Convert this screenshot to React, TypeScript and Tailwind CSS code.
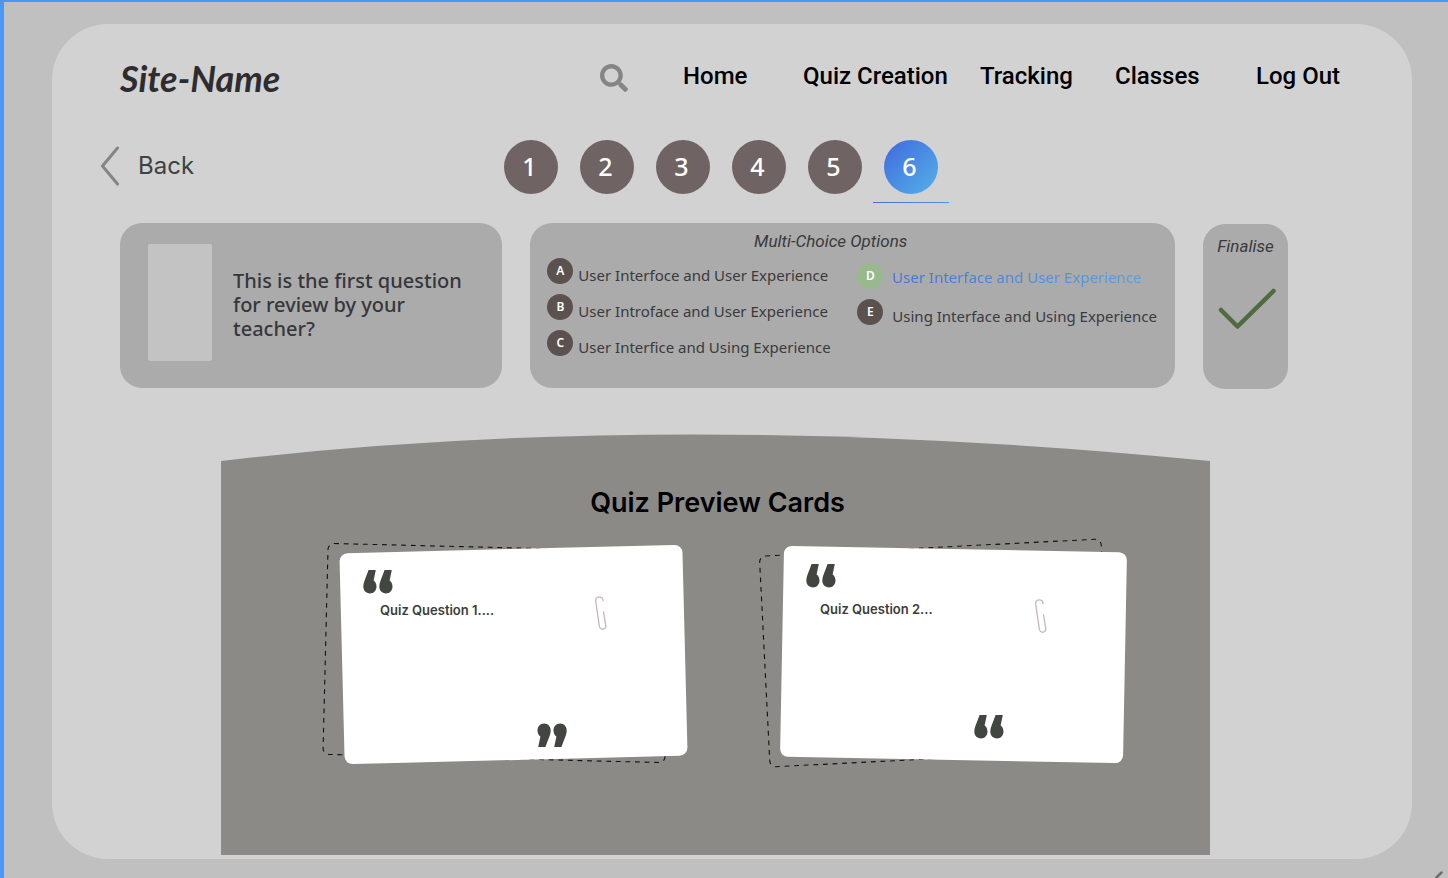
import { FaSearch } from "react-icons/fa";

const steps = [1, 2, 3, 4, 5, 6];
const activeStep = 6;

const navItems = ["Home", "Quiz Creation", "Tracking", "Classes", "Log Out"];

const leftOptions = [
  { letter: "A", label: "User Interfoce and User Experience" },
  { letter: "B", label: "User Introface and User Experience" },
  { letter: "C", label: "User Interfice and Using Experience" },
];

function QuoteMark({ className = "" }: { className?: string }) {
  return (
    <svg viewBox="0 0 30 24" className={`h-6 w-[30px] shrink-0 fill-[#414640] ${className}`} aria-hidden="true">
      <path d="M5.6 0H12.8L10.6 10.4C12.4 11.6 13.5 13.8 13.5 16.4C13.5 20.6 10.6 23.4 6.9 23.4C3.1 23.4 .3 20.6 .3 16.6C.3 14.6 .8 12.7 1.6 10.6Z" />
      <path d="M21.6 0H28.8L26.6 10.4C28.4 11.6 29.5 13.8 29.5 16.4C29.5 20.6 26.6 23.4 22.9 23.4C19.1 23.4 16.3 20.6 16.3 16.6C16.3 14.6 16.8 12.7 17.6 10.6Z" />
    </svg>
  );
}

function PaperClip() {
  return (
    <svg viewBox="0 0 12 34" className="h-[34px] w-3 shrink-0" fill="none" stroke="#c4b7b7" strokeWidth="1.3" strokeLinecap="round" aria-hidden="true">
      <path d="M8 4.7C7.9 2 6.4 .7 4 .8C1.5 1 .4 2.5 .7 5L4.2 29.5C4.7 32.3 6.3 33.4 8.1 33.2C10.1 33 11 31.4 10.7 29.2L8.6 16" />
    </svg>
  );
}

function Outline({ className }: { className: string }) {
  return (
    <svg viewBox="0 0 343 212" className={`absolute h-[212px] w-[343px] overflow-visible ${className}`} aria-hidden="true">
      <rect x="0.5" y="0.5" width="342" height="211" rx="6" fill="none" stroke="#111" strokeWidth="1.1" strokeDasharray="4.8 4.8" />
    </svg>
  );
}

function OptionBadge({ letter, correct = false }: { letter: string; correct?: boolean }) {
  return (
    <span
      className={`flex size-[26px] shrink-0 items-center justify-center rounded-full text-xs font-semibold text-white ${
        correct ? "bg-[#97b98b]" : "bg-[#5b5250]"
      }`}
    >
      {letter}
    </span>
  );
}

export default function App() {
  return (
    <div className="relative flex min-h-screen flex-col overflow-hidden border-t-2 border-l-4 border-[#4798f8] bg-[#c0c0c0] font-['Inter',sans-serif]">
      <div className="mt-[22px] mr-9 mb-[19px] ml-12 flex-1 rounded-[56px] bg-[#d2d2d2] pt-8 pb-1">
        <header className="flex h-11 items-center pr-[60px] pl-[68px]">
          <a href="#" className="font-['Lato',sans-serif] text-[36px] leading-11 font-bold text-[#2d2d2f] italic">
            Site-Name
          </a>
          <button type="button" aria-label="Search" className="mr-[55px] ml-auto">
            <FaSearch className="size-7 text-[#868585]" />
          </button>
          <nav className="grid w-[669px] grid-cols-[120fr_177fr_135fr_141fr_96fr] pb-1 font-['Roboto',sans-serif] text-[24px] leading-8 font-medium whitespace-nowrap text-black">
            {navItems.map((item) => (
              <a key={item} href="#">
                {item}
              </a>
            ))}
          </nav>
        </header>

        <div className="mt-10 grid grid-cols-[1fr_auto_1fr] items-start pr-[70px] pl-12">
          <button type="button" className="flex h-[52px] items-center gap-[18px] justify-self-start text-[24px] leading-8 text-[#414141]">
            <svg viewBox="0 0 20 40" className="h-10 w-5" fill="none" stroke="#858585" strokeWidth="3" strokeLinecap="round" strokeLinejoin="round" aria-hidden="true">
              <path d="M17.5 2L2.5 20L17.5 38" />
            </svg>
            Back
          </button>
          <ol className="grid grid-cols-6 font-['Noto_Sans',sans-serif]">
            {steps.map((step) => (
              <li key={step} className="flex w-[76px] flex-col items-center gap-2">
                <button
                  type="button"
                  aria-current={step === activeStep ? "step" : undefined}
                  className={`flex size-[54px] items-center justify-center rounded-full pr-[3px] text-[25px] font-medium text-white ${
                    step === activeStep ? "bg-linear-to-br from-[#4169dc] to-[#56b0e8]" : "bg-[#6f6463]"
                  }`}
                >
                  {step}
                </button>
                {step === activeStep && <span className="h-px w-full bg-linear-to-r from-[#4270dc] to-[#5094e6]" />}
              </li>
            ))}
          </ol>
          <span />
        </div>

        <div className="mt-5 grid grid-cols-[382fr_644fr_85fr] gap-7 pr-[124px] pl-[68px]">
          <section className="flex h-[165px] items-center rounded-[22px] bg-[#ababab] px-7">
            <div className="mb-1.5 h-[117px] w-16 shrink-0 rounded-xs bg-[#c3c3c3]" />
            <p className="mb-0.5 ml-[21px] max-w-60 font-['Noto_Sans',sans-serif] text-[20px] leading-6 font-medium text-[#36373b]">
              This is the first question for review by your teacher?
            </p>
          </section>

          <section className="h-[165px] rounded-[22px] bg-[#ababab] px-[17px] pt-2 font-['Noto_Sans',sans-serif] text-[15px] leading-5 text-[#3a3a3c]">
            <h2 className="pr-11 text-center font-['Roboto',sans-serif] text-[17px] leading-5 italic">Multi-Choice Options</h2>
            <div className="mt-[7px] flex whitespace-nowrap">
              <div className="flex w-[310px] flex-col gap-[10px]">
                {leftOptions.map((option) => (
                  <button key={option.letter} type="button" className="flex h-[26px] gap-[5px] text-left">
                    <OptionBadge letter={option.letter} />
                    <span className="pt-[7px]">{option.label}</span>
                  </button>
                ))}
              </div>
              <div className="flex flex-col gap-[10px] pt-[5px]">
                <button type="button" className="flex h-[26px] gap-[9px] text-left">
                  <OptionBadge letter="D" correct />
                  <span className="bg-linear-to-r from-[#4272dc] to-[#559fe2] bg-clip-text pt-1 text-transparent">
                    User Interface and User Experience
                  </span>
                </button>
                <button type="button" className="flex h-[26px] gap-[9px] text-left">
                  <OptionBadge letter="E" />
                  <span className="pt-[7px]">Using Interface and Using Experience</span>
                </button>
              </div>
            </div>
          </section>

          <button type="button" className="mt-px flex h-[165px] flex-col items-center rounded-[22px] bg-[#ababab] pt-3 font-['Roboto',sans-serif] text-[17px] leading-5 text-[#3a3a3c] italic">
            Finalise
            <svg viewBox="0 0 58 42" className="mt-8 ml-1 h-[42px] w-[58px]" fill="none" stroke="#4f6b40" strokeWidth="4.5" strokeLinecap="round" strokeLinejoin="round" aria-hidden="true">
              <path d="M3 22L19.5 38.5L55.5 3" />
            </svg>
          </button>
        </div>

        <section className="mt-[45px] mr-[202px] ml-[169px]">
          <svg viewBox="0 0 989 27" preserveAspectRatio="none" className="block h-[27px] w-full" aria-hidden="true">
            <path d="M0 27Q450 -26 989 27Z" fill="#8b8a87" />
          </svg>
          <div className="h-[394px] bg-[#8b8a87] pt-6 pr-[85px] pl-[121px]">
            <h1 className="-ml-8 text-center text-[27px] leading-9 font-semibold text-black">Quiz Preview Cards</h1>
            <div className="mt-7 flex justify-between text-[13px] font-semibold text-[#3c3d3c]">
              <article className="relative h-[211px] w-[343px] pt-[21px]">
                <Outline className="-top-[2px] -left-[17px] rotate-[1.4deg]" />
                <div className="absolute inset-0 -rotate-[1.45deg] rounded-lg bg-white" />
                <div className="relative">
                  <QuoteMark className="ml-[21px]" />
                  <div className="mt-0.5 flex justify-between pr-[78px] pl-[38px]">
                    <h3 className="leading-7">Quiz Question 1....</h3>
                    <PaperClip />
                  </div>
                  <QuoteMark className="mt-[93px] ml-[195px] rotate-180" />
                </div>
              </article>
              <article className="relative h-[211px] w-[343px] pt-[15px]">
                <Outline className="-top-[2px] -left-[18px] -rotate-[2.9deg]" />
                <div className="absolute inset-0 rotate-[1.1deg] rounded-lg bg-white" />
                <div className="relative">
                  <QuoteMark className="ml-6" />
                  <div className="mt-[11px] flex justify-between pr-[78px] pl-[38px]">
                    <h3 className="leading-5">Quiz Question 2...</h3>
                    <PaperClip />
                  </div>
                  <QuoteMark className="mt-[82px] ml-[192px]" />
                </div>
              </article>
            </div>
          </div>
        </section>
      </div>
      <svg viewBox="0 0 8 7" className="absolute right-[5px] bottom-0 h-[7px] w-2" stroke="#6e6e6e" strokeWidth="2.5" strokeLinecap="round" aria-hidden="true">
        <path d="M1 7L6.5 1.5" />
      </svg>
    </div>
  );
}
